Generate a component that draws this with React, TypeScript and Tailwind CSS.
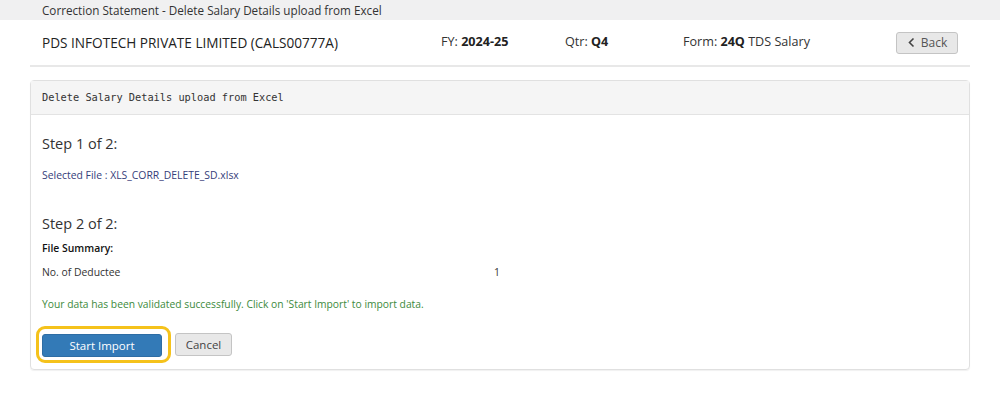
import React from 'react';

const font = { fontFamily: '"Open Sans", "Noto Sans", sans-serif' };

const BackIcon = () => (
  <svg width="9" height="11" viewBox="0 0 9 11" className="mr-[5px]">
    <path d="M6.5 1.5 L2.5 5.5 L6.5 9.5" fill="none" stroke="#444" strokeWidth="1.6" />
  </svg>
);

const App: React.FC = () => {
  return (
    <div className="w-[1000px] h-[395px] bg-white text-[#333]" style={font}>
      <div className="h-[20px] bg-[#f0f0f1] pl-[42px] text-[11.7px] leading-[20px] text-[#333]">
        Correction Statement - Delete Salary Details upload from Excel
      </div>

      <div className="mx-[30px] h-[47px] flex items-center border-b-2 border-[#e8e8e8] pl-[12px] pr-[12px]">
        <div className="w-[399px] text-[13.6px] text-[#222] pt-[2px]">PDS INFOTECH PRIVATE LIMITED (CALS00777A)</div>
        <div className="w-[124px] text-[12.6px] text-[#333]">
          FY: <span className="font-bold text-[#222]">2024-25</span>
        </div>
        <div className="w-[118px] text-[12.6px] text-[#333]">
          Qtr: <span className="font-bold text-[#222]">Q4</span>
        </div>
        <div className="flex-1 text-[12.6px] text-[#333]">
          Form: <span className="font-bold text-[#222]">24Q</span> TDS Salary
        </div>
        <button className="w-[62px] h-[22px] flex items-center justify-center rounded-[3px] border border-[#c4c4c4] bg-[#e8e8e8] text-[12px] text-[#555]">
          <BackIcon />
          Back
        </button>
      </div>

      <div className="mx-[30px] mt-[13px] h-[290px] rounded-[4px] border border-[#e0e0e0] shadow-[0_1px_1px_rgba(0,0,0,0.06)]">
        <div className="h-[34px] bg-[#f5f5f5] border-b border-[#e3e3e3] pl-[11px] flex items-center text-[10.3px] text-[#333]" style={{ fontFamily: '"DejaVu Sans Mono", monospace' }}>
          Delete Salary Details upload from Excel
        </div>
        <div className="pl-[11px] pt-[19px]">
          <div className="text-[14.5px] text-[#333] leading-[20px]">Step 1 of 2:</div>
          <div className="mt-[13px] text-[10.4px] text-[#36407a] leading-[16px]">Selected File : XLS_CORR_DELETE_SD.xlsx</div>
          <div className="mt-[31px] text-[14.5px] text-[#333] leading-[20px]">Step 2 of 2:</div>
          <div className="mt-[6px] text-[10.4px] font-semibold text-[#111] leading-[16px]">File Summary:</div>
          <div className="mt-[8px] flex text-[10.4px] text-[#333] leading-[16px]">
            <div className="w-[452px]">No. of Deductee</div>
            <div>1</div>
          </div>
          <div className="mt-[16px] text-[10.3px] text-[#3c8a3c] leading-[16px]">
            Your data has been validated successfully. Click on 'Start Import' to import data.
          </div>
          <div className="mt-[14px] flex items-center">
            <div className="-ml-[6px] rounded-[9px] border-[3px] border-[#f5c21b] pl-[3px] pr-[6px] py-[3px]">
              <button className="w-[120px] h-[23px] rounded-[3px] bg-[#337ab7] border border-[#2e6da4] text-white text-[11.5px] leading-[21px]">
                Start Import
              </button>
            </div>
            <button className="ml-[4px] w-[57px] h-[23px] rounded-[3px] bg-[#e8e8e8] border border-[#c4c4c4] text-[#444] text-[11.5px] leading-[21px]">
              Cancel
            </button>
          </div>
        </div>
      </div>
    </div>
  );
};

export default App;
